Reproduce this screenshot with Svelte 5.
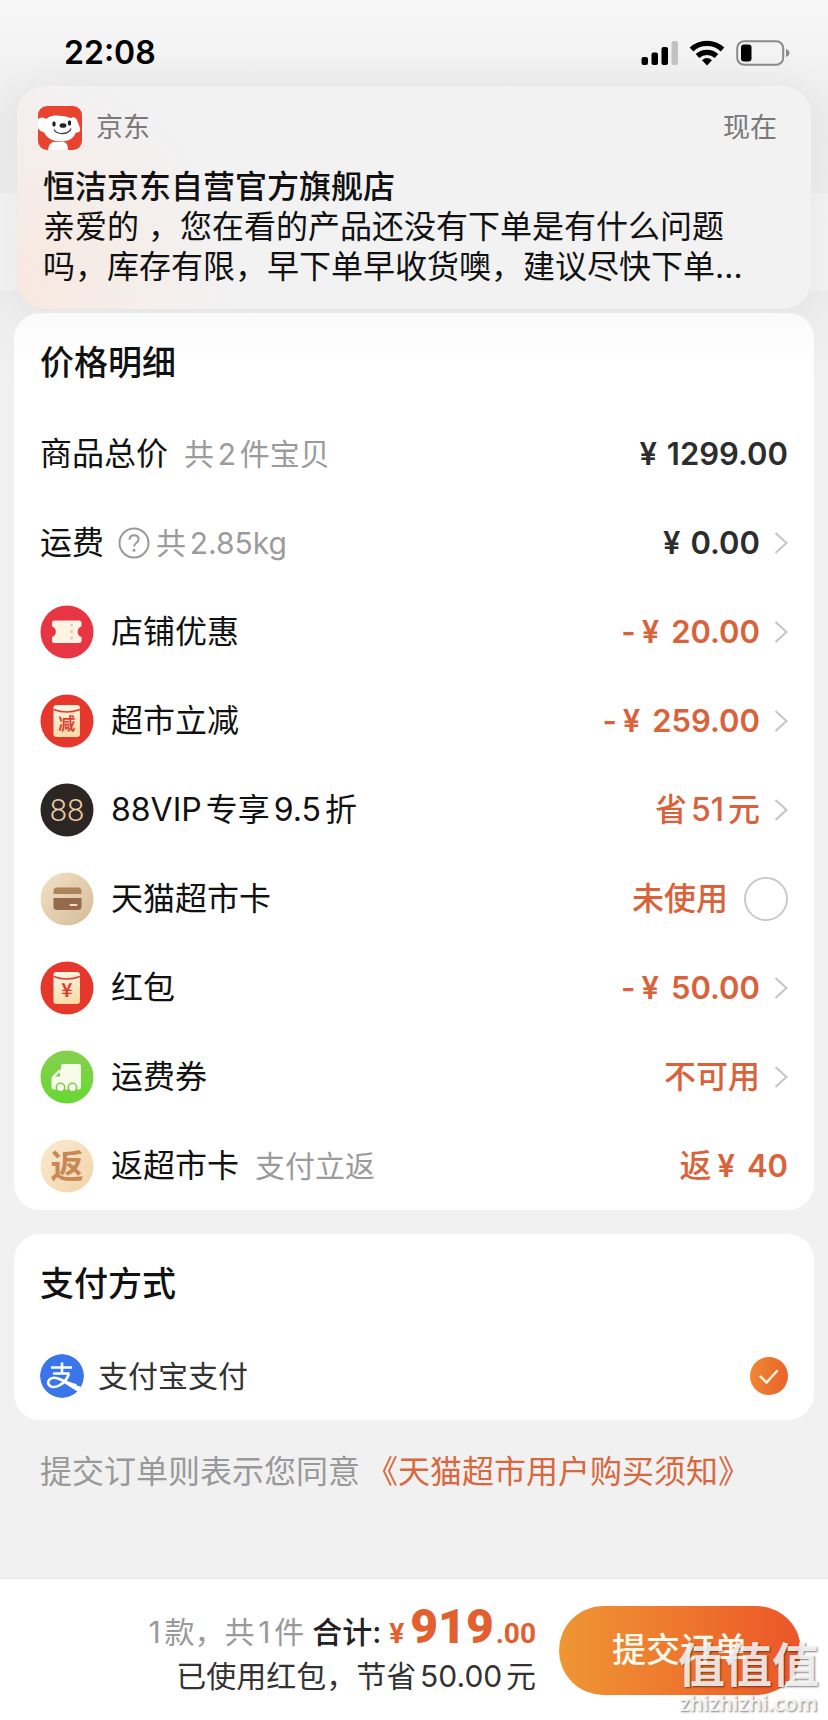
<script lang="ts">
	type Row = {
		icon: string;
		label: string;
		value: string;
		minus?: boolean;
		yen?: boolean;
		end: 'arrow' | 'check';
	};

	const rows: Row[] = [
		{ icon: 'coupon', label: '店铺优惠', value: '20.00', minus: true, yen: true, end: 'arrow' },
		{ icon: 'reduce', label: '超市立减', value: '259.00', minus: true, yen: true, end: 'arrow' },
		{ icon: 'vip', label: '88VIP专享9.5折', value: '省51元', end: 'arrow' },
		{ icon: 'card', label: '天猫超市卡', value: '未使用', end: 'check' },
		{ icon: 'packet', label: '红包', value: '50.00', minus: true, yen: true, end: 'arrow' },
		{ icon: 'truck', label: '运费券', value: '不可用', end: 'arrow' }
	];

	let useCard = $state(false);
	let pay = $state('alipay');
</script>

{#snippet arrow()}
	<svg class="arrow" viewBox="0 0 14 24" aria-hidden="true">
		<path d="M1.5 2 12.5 12 1.5 22" fill="none" stroke="#c6c6c6" stroke-width="2.2" />
	</svg>
{/snippet}

{#snippet envelope(text: string, size: number)}
	<circle cx="27" cy="27" r="26.5" fill="#e5372c" />
	<rect x="13.5" y="11" width="26.5" height="32" rx="3" fill="url(#cream)" />
	<path d="M13.5 15.5q13.2 5 26.5 0" fill="none" stroke="#d8402f" stroke-width="1.4" />
	<text x="26.8" y="36" font-size={size} font-weight="700" text-anchor="middle" fill="#d9402f"
		>{text}</text
	>
{/snippet}

{#snippet icon(name: string)}
	<svg class="icon" viewBox="0 0 54 54" aria-hidden="true">
		{#if name === 'coupon'}
			<circle cx="27" cy="27" r="26.5" fill="#e73544" />
			<path
				d="M14.5 15.500h24.500q2.500 0 2.500 2.500v3.500a5.500 5.500 0 0 0 0 10.500v3.500q0 2.500-2.500 2.500H14.500q-2.500 0-2.500-2.500V32a5.500 5.500 0 0 0 0-10.500v-3.500q0-2.500 2.500-2.500z"
				fill="#fff3e4"
			/>
			<path d="M31.500 18.500v17" stroke="#e3cdb8" stroke-width="2.500" stroke-dasharray="3 3.500" />
		{:else if name === 'reduce'}
			{@render envelope('减', 17)}
		{:else if name === 'packet'}
			{@render envelope('¥', 19)}
		{:else if name === 'vip'}
			<circle cx="27" cy="27" r="26.5" fill="#2b2523" />
			<text class="digits" x="27" y="38" font-size="31" text-anchor="middle" fill="#eec9a0"
				>88</text
			>
		{:else if name === 'card'}
			<circle cx="27" cy="27" r="26.5" fill="url(#sand)" />
			<path d="M13.500 22v-3q0-3.500 3.500-3.500h21q3.500 0 3.500 3.500v3z" fill="#ad825c" />
			<path d="M13.500 26h28v8.500q0 3.500-3.500 3.500H17q-3.500 0-3.500-3.500z" fill="#95694c" />
			<path d="M30.500 33h6" stroke="#f3dfc2" stroke-width="2" stroke-linecap="round" />
		{:else if name === 'truck'}
			<circle cx="27" cy="27" r="26.5" fill="url(#green)" />
			<path
				d="M23 14h16q2 0 2 2v21.500q0 2-2 2H14q-2.500 0-2.500-2.500v-8q0-2 1.500-3.500l5-5q1.500-1 3-1V16q0-2 2-2z"
				fill="#f6fbea"
			/>
			<path d="M20 22.500v4h-5z" fill="#77cd49" />
			<circle cx="20.500" cy="37.500" r="4.200" fill="#f6fbea" stroke="#77cd49" stroke-width="1.500" />
			<circle cx="32.500" cy="37.500" r="4.200" fill="#f6fbea" stroke="#77cd49" stroke-width="1.500" />
		{:else}
			<circle cx="27" cy="27" r="26.5" fill="url(#peach)" />
			<text x="27" y="39" font-size="33" font-weight="700" text-anchor="middle" fill="#c98755"
				>返</text
			>
		{/if}
	</svg>
{/snippet}

{#snippet rowContent(row: Row)}
	{@render icon(row.icon)}
	<span>{row.label}</span>
	<span class="value orange">
		{#if row.minus}<span>-</span>{/if}
		{#if row.yen}<span class="yen">¥</span>{/if}
		<span class={{ words: !row.yen }}>{row.value}</span>
	</span>
{/snippet}

<svg class="defs" aria-hidden="true">
	<defs>
		<linearGradient id="cream" x1="0" y1="0" x2="0.3" y2="1">
			<stop offset="0" stop-color="#fff8ea" />
			<stop offset="1" stop-color="#fbdcab" />
		</linearGradient>
		<linearGradient id="sand" x1="0" y1="0" x2="1" y2="1">
			<stop offset="0" stop-color="#f3e2c6" />
			<stop offset="1" stop-color="#d3bb97" />
		</linearGradient>
		<linearGradient id="green" x1="0" y1="0" x2="0" y2="1">
			<stop offset="0" stop-color="#86cf50" />
			<stop offset="1" stop-color="#68d832" />
		</linearGradient>
		<linearGradient id="peach" x1="0" y1="0" x2="1" y2="1">
			<stop offset="0" stop-color="#f9ead2" />
			<stop offset="1" stop-color="#f3d3a8" />
		</linearGradient>
	</defs>
</svg>

<div class="page">
	<header class="status">
		<time>22:08</time>
		<svg class="signal" viewBox="0 0 38 26" aria-hidden="true">
			<rect x="1.500" y="17" width="6.500" height="8" rx="2" />
			<rect x="11.500" y="12.500" width="6.500" height="12.500" rx="2" />
			<rect x="21.500" y="7" width="6.500" height="18" rx="2" />
			<rect x="31.500" y="1" width="6.500" height="24" rx="2" fill="#c2c2c2" />
		</svg>
		<svg class="wifi" viewBox="0 0 36 26" aria-hidden="true">
			<g fill="none" stroke="#000" stroke-width="5.200">
				<path d="M2.500 9.500a22.500 22.500 0 0 1 31 0" />
				<path d="M8.500 16a14 14 0 0 1 19 0" />
			</g>
			<path d="M18 25.500l-5-5.300q5-4.200 10 0z" />
		</svg>
		<svg class="battery" viewBox="0 0 54 26" aria-hidden="true">
			<rect x="1.200" y="1.200" width="46" height="23.600" rx="7" fill="none" stroke="#8b8b8b" stroke-width="2" />
			<rect x="5" y="4.500" width="10.500" height="17" rx="3" />
			<path d="M50 9q3.500 1.500 3.500 4t-3.500 4z" fill="#8b8b8b" />
		</svg>
	</header>

	<section class="notice">
		<div class="notice-head">
			<svg class="app-icon" viewBox="0 0 44 44" aria-hidden="true">
				<clipPath id="appClip"><rect width="44" height="44" rx="9" /></clipPath>
				<g clip-path="url(#appClip)">
					<rect width="44" height="44" fill="#e8432f" />
					<path d="M10 44q1-7 5-8h11q4 1 4 8z" fill="#fff" />
					<path
						d="M0 13q4-3 8 0 3-3 8-3.500 10-.500 17 2.500 4-2 6 2l3 8q1 5-4 4.500-3 8-13 9-14 1-19-9-4-1-6-4z"
						fill="#fff"
					/>
					<ellipse cx="16" cy="18" rx="1.700" ry="2.700" fill="#222" />
					<ellipse cx="31.500" cy="17" rx="1.700" ry="2.700" fill="#222" />
					<ellipse cx="25" cy="19.500" rx="3.400" ry="2.300" fill="#222" />
					<path d="M16 23.500q2.500 4.500 9 4t8-5" fill="none" stroke="#444" stroke-width="1.300" />
				</g>
			</svg>
			<span>京东</span>
			<time>现在</time>
		</div>
		<h2>恒洁京东自营官方旗舰店</h2>
		<p>亲爱的 ，您在看的产品还没有下单是有什么问题吗，库存有限，早下单早收货噢，建议尽快下单…</p>
	</section>

	<main>
		<section class="card">
			<h1>价格明细</h1>
			<div class="row">
				<span>商品总价</span>
				<span class="note">共2件宝贝</span>
				<span class="value"><span class="yen near">¥</span><span>1299.00</span></span>
			</div>
			<button class="row">
				<span>运费</span>
				<svg class="help" viewBox="0 0 32 32" aria-hidden="true">
					<circle cx="16" cy="16" r="14.500" fill="none" stroke="#999" stroke-width="2" />
					<path
						d="M11.500 12.800q.200-4.500 4.600-4.500t4.500 4q0 2-2.300 3.700t-2.300 3.600"
						fill="none"
						stroke="#999"
						stroke-width="2"
					/>
					<circle cx="16" cy="23.300" r="1.500" fill="#999" />
				</svg>
				<span class="note tight">共2.85kg</span>
				<span class="value"><span class="yen near">¥</span><span>0.00</span></span>
				{@render arrow()}
			</button>
			{#each rows as row}
				{#if row.end === 'check'}
					<label class="row">
						{@render rowContent(row)}
						<input class="ring" type="checkbox" bind:checked={useCard} />
					</label>
				{:else}
					<button class="row">
						{@render rowContent(row)}
						{@render arrow()}
					</button>
				{/if}
			{/each}
			<div class="row">
				{@render icon('back')}
				<span>返超市卡</span>
				<span class="note">支付立返</span>
				<span class="value orange">
					<span class="words">返</span><span class="yen">¥</span><span>40</span>
				</span>
			</div>
		</section>

		<section class="card pay">
			<h1>支付方式</h1>
			<label class="row">
				<svg class="alipay" viewBox="0 0 44 44" aria-hidden="true">
					<clipPath id="payClip"><circle cx="22" cy="22" r="22" /></clipPath>
					<g clip-path="url(#payClip)">
						<circle cx="22" cy="22" r="22" fill="#3a76ea" />
						<g fill="none" stroke="#fff" stroke-width="2.600">
							<path d="M11 13.500h21M22 8.500v10.500M13 19.500h16.500" />
							<path
								d="M29 19.500q-2.500 8-9 11.500-6 3.500-10 1-3.500-3-.500-6.500 4-3.500 11 0 8 4 16 6"
							/>
						</g>
						<path d="M24 26.500q8 4 20 7v3l-5 2q-8-5-15-9.500z" fill="#fff" />
						<path d="M39 37.500l8-3v8z" fill="#fff" />
					</g>
				</svg>
				<span class="pay-name">支付宝支付</span>
				<input class="dot" type="radio" name="pay" value="alipay" bind:group={pay} />
				<svg class="tick" viewBox="0 0 38 38" aria-hidden="true">
					<path
						d="M10.500 19.500l6 6 10.500-11.500"
						fill="none"
						stroke="#fff6e8"
						stroke-width="2.400"
						stroke-linecap="round"
					/>
				</svg>
			</label>
		</section>

		<p class="terms">提交订单则表示您同意<a href="#terms">《天猫超市用户购买须知》</a></p>
	</main>

	<footer>
		<div class="sum">
			<div class="total">
				<span class="count">1款，共1件</span>
				<span class="sum-label">合计:</span>
				<span class="price"><small>¥</small><b>919</b><small>.00</small></span>
			</div>
			<div>已使用红包，节省50.00元</div>
		</div>
		<button class="submit">提交订单</button>
		<div class="mark">
			<strong>值值值</strong>
			<span>zhizhizhi.com</span>
		</div>
	</footer>
</div>

<style>
	:global(body) {
		background: #f1f1f1;
	}

	.page {
		display: flex;
		flex-direction: column;
		min-height: 100vh;
		font-family: Inter, 'Noto Sans CJK SC', sans-serif;
		font-size: 32px;
		line-height: 40px;
		color: #111;
		text-autospace: normal;
		background:
			linear-gradient(#f6f6f6, #f4f4f4 40px, #ececed 120px, #ededee 193px, #f3f3f3 194px, #f2f2f2 290px, #ececec 291px, #f1f1f1 390px)
			no-repeat;
	}

	.defs {
		position: absolute;
		width: 0;
		height: 0;
	}

	svg {
		flex: none;
		display: block;
	}

	h1,
	h2,
	p {
		margin: 0;
	}

	.status {
		display: flex;
		align-items: center;
		gap: 11px;
		padding: 33px 38px 13px 64px;
		color: #000;
	}

	.status time {
		margin-right: auto;
		font-weight: 600;
	}

	.signal {
		width: 38px;
		height: 26px;
	}

	.wifi {
		width: 36px;
		height: 26px;
	}

	.battery {
		width: 54px;
		height: 26px;
	}

	.notice {
		margin: 0 17px;
		padding: 20px 26px 22px;
		border-radius: 28px;
		background:
			radial-gradient(circle at 0 88%, #f8e8df, #f8e8df00 220px),
			#f2f2f3;
		box-shadow: 0 0 40px #0000000d;
	}

	.notice-head {
		display: flex;
		align-items: center;
		gap: 14px;
		margin: 0 8px 17px -5px;
		font-size: 27px;
		color: #7a7878;
	}

	.notice-head time {
		margin-left: auto;
	}

	.app-icon {
		width: 44px;
		height: 44px;
	}

	.notice h2 {
		font-size: 32px;
		font-weight: 500;
	}

	main {
		display: flex;
		flex-direction: column;
		gap: 24px;
		margin: 4px 14px 0;
	}

	.card {
		position: relative;
		padding: 26px 26px 0;
		border-radius: 26px;
		background: linear-gradient(#fafafa, #fff 50px);
	}

	.card h1 {
		margin-bottom: 22px;
		font-size: 34px;
		font-weight: 500;
		line-height: 48px;
	}

	.row {
		display: flex;
		align-items: center;
		box-sizing: border-box;
		width: 100%;
		height: 89px;
		padding: 0;
		border: 0;
		background: none;
		font: inherit;
		color: inherit;
		text-align: left;
		white-space: nowrap;
	}

	.icon {
		width: 54px;
		height: 54px;
		margin-right: 17px;
		font-family: 'Noto Sans CJK SC', sans-serif;
	}

	.digits {
		font-family: Roboto, sans-serif;
		font-weight: 300;
	}

	.note {
		margin-left: 16px;
		font-size: 30px;
		color: #9b9b9b;
	}

	.tight {
		margin-left: 6px;
	}

	.help {
		width: 32px;
		height: 32px;
		margin-left: 14px;
	}

	.value {
		display: flex;
		align-items: center;
		margin-left: auto;
		font-size: 31px;
		font-weight: 600;
		color: #2d2d2d;
	}

	.orange {
		color: #d9623a;
	}

	.words {
		font-size: 32px;
		font-weight: 500;
	}

	.yen {
		margin: 0 12px 0 6px;
	}

	.near {
		margin-right: 10px;
	}

	.arrow {
		width: 14px;
		height: 24px;
		margin-left: 14px;
	}

	input {
		flex: none;
		appearance: none;
		box-sizing: border-box;
		margin: 0;
		border-radius: 50%;
	}

	.ring {
		width: 44px;
		height: 44px;
		margin-left: 16px;
		border: 2px solid #c9c9c9;
	}

	.ring:checked {
		border: 12px solid #ee6a2a;
	}

	.pay {
		background: #fff;
	}

	.pay h1 {
		margin-bottom: 24px;
	}

	.pay .row {
		position: relative;
		height: 88px;
		font-size: 30px;
	}

	.alipay {
		width: 44px;
		height: 44px;
		margin-right: 14px;
	}

	.pay-name {
		color: #333;
	}

	.dot {
		width: 38px;
		height: 38px;
		margin-left: auto;
		background: linear-gradient(100deg, #ef8a33, #e8602a);
	}

	.tick {
		position: absolute;
		right: 0;
		width: 38px;
		height: 38px;
		pointer-events: none;
	}

	.terms {
		padding: 4px 26px;
		line-height: 48px;
		color: #999;
	}

	.terms a {
		margin-left: 6px;
		color: #d8683e;
		text-decoration: none;
	}

	footer {
		position: relative;
		display: flex;
		align-items: center;
		justify-content: flex-end;
		gap: 23px;
		margin-top: auto;
		padding: 23px 27px 22px;
		border-top: 1px solid #eaeaea;
		background: #fff;
		white-space: nowrap;
	}

	.sum {
		padding-top: 8px;
		font-size: 30px;
		line-height: 44px;
		text-align: right;
		color: #333;
	}

	.total {
		display: flex;
		align-items: baseline;
		justify-content: flex-end;
		gap: 8px;
		height: 44px;
	}

	.count {
		color: #999;
	}

	.sum-label {
		font-weight: 500;
		color: #222;
	}

	.price {
		font-family: Roboto, sans-serif;
		font-weight: 700;
		line-height: 32px;
		color: #e2602f;
	}

	.price b {
		margin: 0 2px 0 6px;
		font-size: 48px;
	}

	.price small {
		font-size: 28px;
	}

	.submit {
		width: 242px;
		height: 89px;
		padding: 0;
		border: 0;
		border-radius: 45px;
		background: linear-gradient(90deg, #ee9634, #ee7a2e 45%, #ec5528);
		font: inherit;
		font-size: 34px;
		font-weight: 500;
		color: #fff8ec;
	}

	.mark {
		position: absolute;
		right: 9px;
		bottom: 4px;
		display: flex;
		flex-direction: column;
		align-items: center;
		color: #ffffffd9;
		text-shadow: 1px 1px 2px #00000080;
		pointer-events: none;
	}

	.mark strong {
		font-size: 47px;
		line-height: 50px;
	}

	.mark span {
		font-family: 'Noto Sans', sans-serif;
		font-size: 21px;
		font-weight: 600;
		line-height: 26px;
	}
</style>
